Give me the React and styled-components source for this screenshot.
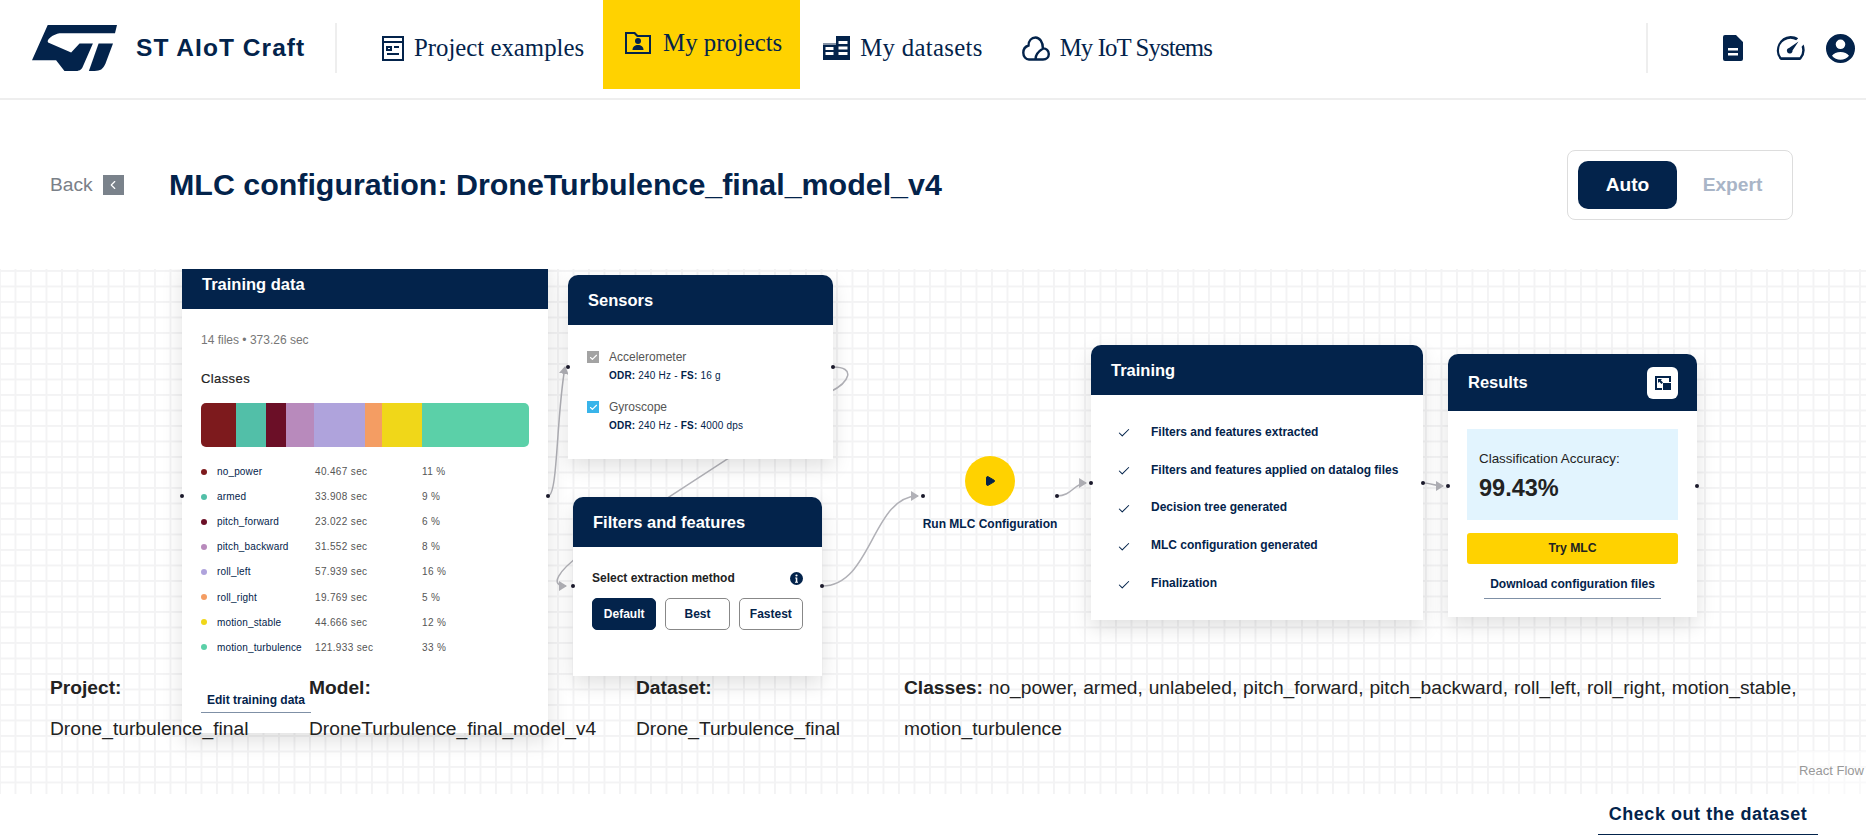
import styled, { createGlobalStyle } from "styled-components";
import { Check, ChevronLeft, Play } from "lucide-react";

const NAVY = "#03234b";

const GlobalStyle = createGlobalStyle`
  html, body {
    margin: 0;
    padding: 0;
    background: #fff;
    overflow: hidden;
  }
  body {
    font-family: "Liberation Sans", Arial, sans-serif;
    color: #222;
  }
  * {
    box-sizing: border-box;
  }
`;

const Page = styled.div`
  width: 1866px;
  height: 840px;
  display: flex;
  flex-direction: column;
`;

const Header = styled.header`
  height: 100px;
  flex: none;
  display: flex;
  align-items: flex-start;
  border-bottom: 2px solid #eee;
  padding: 0 11px 0 32px;
`;

const Brand = styled.div`
  display: flex;
  align-items: center;
  height: 96px;
  width: 303px;
  flex: none;
  gap: 19px;
`;

const BrandName = styled.span`
  font-size: 24.5px;
  font-weight: 700;
  color: ${NAVY};
  letter-spacing: 1.05px;
  white-space: nowrap;
`;

const Divider = styled.div`
  width: 2px;
  height: 50px;
  margin-top: 23px;
  flex: none;
  background: #eee;
`;

const Nav = styled.nav`
  display: flex;
  align-items: flex-start;
  margin-left: 45px;
  flex: 1;
`;

const NavItem = styled.a`
  display: flex;
  align-items: center;
  gap: ${(props) => props.$gap || 10}px;
  height: ${(props) => (props.$active ? 89 : 96)}px;
  padding: ${(props) => (props.$active ? "0 18px 3px 22px" : "0")};
  margin-left: ${(props) => props.$left || 0}px;
  background: ${(props) => (props.$active ? "#ffd200" : "transparent")};
  font-family: "Liberation Serif", serif;
  font-size: 24.8px;
  letter-spacing: ${(props) => props.$spacing || 0}px;
  color: ${NAVY};
  white-space: nowrap;
`;

const Tools = styled.div`
  display: flex;
  align-items: center;
  height: 96px;
  flex: none;
`;

const ToolIcon = styled.svg`
  display: block;
  margin-left: ${(props) => props.$left}px;
  fill: ${NAVY};
`;

const TitleBar = styled.div`
  height: 169px;
  flex: none;
  display: flex;
  align-items: center;
  padding: 0 73px 0 50px;
`;

const Back = styled.div`
  display: flex;
  align-items: center;
  gap: 10px;
  font-size: 19.2px;
  color: #7a8088;
  width: 119px;
  flex: none;
`;

const BackBox = styled.span`
  display: flex;
  align-items: center;
  justify-content: center;
  width: 21px;
  height: 20px;
  background: #7a828b;
  color: #fff;
`;

const PageTitle = styled.h1`
  margin: 0;
  flex: 1;
  font-size: 30.4px;
  font-weight: 700;
  color: ${NAVY};
  white-space: nowrap;
`;

const Toggle = styled.div`
  display: flex;
  align-items: center;
  width: 226px;
  height: 70px;
  padding: 0 10px;
  border: 1px solid #ddd;
  border-radius: 8px;
`;

const ToggleOption = styled.span`
  flex: none;
  width: ${(props) => (props.$active ? 99 : 105)}px;
  height: 48px;
  padding-left: ${(props) => (props.$active ? 0 : 6)}px;
  line-height: 48px;
  text-align: center;
  border-radius: 10px;
  font-size: 19.2px;
  font-weight: 700;
  background: ${(props) => (props.$active ? NAVY : "transparent")};
  color: ${(props) => (props.$active ? "#fff" : "#a9b5c7")};
`;

const Canvas = styled.main`
  position: relative;
  height: 525px;
  flex: none;
  overflow: hidden;
  background-color: #fff;
  background-image: linear-gradient(to right, #f3f3f4 2px, transparent 2px),
    linear-gradient(to bottom, #f3f3f4 2px, transparent 2px);
  background-size: 15.5px 15.5px;
  background-position: -1px 1px;
`;

const Edges = styled.svg`
  position: absolute;
  inset: 0;
  fill: none;
  stroke: #b1b1b7;
  stroke-width: 1.5;
`;

const Node = styled.section`
  position: absolute;
  left: ${(props) => props.$x}px;
  top: ${(props) => props.$y}px;
  width: ${(props) => props.$w}px;
  height: ${(props) => props.$h}px;
  background: #fff;
  border-radius: ${(props) => (props.$square ? "0" : "10px 10px 0 0")};
  box-shadow: 0 8px 20px rgba(0, 0, 0, 0.12);
  display: flex;
  flex-direction: column;
`;

const NodeHeader = styled.div`
  height: ${(props) => props.$h || 50}px;
  flex: none;
  display: flex;
  align-items: center;
  justify-content: space-between;
  padding: 0 19px 0 20px;
  background: ${NAVY};
  border-radius: inherit;
  font-size: 16.5px;
  font-weight: 700;
  color: #fff;
`;

const Handle = styled.i`
  position: absolute;
  left: ${(props) => props.$x}px;
  top: ${(props) => props.$y}px;
  width: 4px;
  height: 4px;
  margin: -2px 0 0 -2px;
  border-radius: 50%;
  background: #1a192b;
`;

const TrainingBody = styled.div`
  padding: 24px 19px 0;
`;

const Muted = styled.div`
  font-size: 12px;
  line-height: 14px;
  color: #777;
`;

const SectionLabel = styled.div`
  margin-top: 24px;
  font-size: 13px;
  line-height: 15px;
  font-weight: 500;
  letter-spacing: 0.4px;
  color: #222;
  -webkit-text-stroke: 0.2px #222;
`;

const Bar = styled.div`
  display: flex;
  height: 44px;
  margin-top: 17px;
  border-radius: 5px;
  overflow: hidden;
`;

const Segment = styled.span`
  width: ${(props) => props.$w}px;
  background: ${(props) => props.$color};
`;

const ClassList = styled.div`
  margin-top: 12px;
`;

const ClassRow = styled.div`
  display: grid;
  grid-template-columns: 16px 98px 107px 1fr;
  align-items: center;
  height: 25.1px;
  font-size: 10px;
  letter-spacing: 0.35px;
  color: #555;
`;

const Dot = styled.span`
  width: 6px;
  height: 6px;
  border-radius: 50%;
  background: ${(props) => props.$color};
`;

const ClassName = styled.span`
  color: ${NAVY};
  letter-spacing: 0.15px;
`;

const LinkButton = styled.a`
  display: block;
  text-align: center;
  font-weight: 700;
  color: ${NAVY};
  border-bottom: 1px solid #7f90a6;
  font-size: ${(props) => props.$size}px;
  width: ${(props) => props.$w}px;
  padding-bottom: ${(props) => props.$pad}px;
  margin: ${(props) => props.$margin};
`;

const SensorBody = styled.div`
  padding: 25px 19px 0;
  display: flex;
  flex-direction: column;
  gap: 17px;
`;

const Sensor = styled.div`
  display: grid;
  grid-template-columns: 22px 1fr;
  row-gap: 5px;
  align-items: center;
`;

const CheckBox = styled.span`
  display: flex;
  align-items: center;
  justify-content: center;
  width: 12px;
  height: 12px;
  color: #fff;
  background: ${(props) => props.$color};
`;

const SensorName = styled.span`
  font-size: 12px;
  line-height: 14px;
  color: #555;
`;

const SensorMeta = styled.span`
  grid-column: 2;
  font-size: 10px;
  line-height: 14px;
  letter-spacing: 0.2px;
  color: ${NAVY};
  b {
    font-weight: 700;
  }
`;

const FilterBody = styled.div`
  padding: 24px 19px 0;
`;

const FilterHead = styled.div`
  display: flex;
  align-items: center;
  justify-content: space-between;
  font-size: 12px;
  font-weight: 700;
  color: #222;
`;

const MethodRow = styled.div`
  display: flex;
  gap: 9px;
  margin-top: 13px;
`;

const MethodButton = styled.button`
  width: 65px;
  height: 32px;
  padding: 0;
  border-radius: 5px;
  border: 1px solid ${(props) => (props.$active ? NAVY : "#888")};
  background: ${(props) => (props.$active ? NAVY : "#fff")};
  color: ${(props) => (props.$active ? "#fff" : NAVY)};
  font-family: inherit;
  font-size: 12px;
  font-weight: 700;
`;

const RunNode = styled.div`
  position: absolute;
  left: ${(props) => props.$x}px;
  top: ${(props) => props.$y}px;
  width: 134px;
  display: flex;
  flex-direction: column;
  align-items: center;
`;

const RunButton = styled.span`
  display: flex;
  align-items: center;
  justify-content: center;
  width: 50px;
  height: 50px;
  border-radius: 50%;
  background: #ffd200;
  color: ${NAVY};
`;

const RunLabel = styled.span`
  margin-top: 11px;
  font-size: 12px;
  font-weight: 700;
  color: ${NAVY};
  white-space: nowrap;
`;

const StepList = styled.ul`
  list-style: none;
  margin: 0;
  padding: 18px 0 0 26px;
`;

const Step = styled.li`
  display: flex;
  align-items: center;
  gap: 20px;
  height: 37.8px;
  font-size: 12px;
  font-weight: 700;
  color: ${NAVY};
  svg {
    margin-top: 3px;
  }
`;

const ExpandButton = styled.span`
  display: flex;
  align-items: center;
  justify-content: center;
  width: 31px;
  height: 32px;
  border-radius: 6px;
  background: #fff;
`;

const ResultBody = styled.div`
  padding: 18px 19px 0;
`;

const Accuracy = styled.div`
  height: 91px;
  padding: 22px 12px 0;
  background: #e2f4fe;
  font-size: 13.4px;
`;

const AccuracyValue = styled.div`
  margin-top: 9px;
  font-size: 23.5px;
  font-weight: 700;
`;

const TryButton = styled.button`
  display: block;
  width: 100%;
  height: 31px;
  margin-top: 13px;
  padding: 0 0 2px;
  border: none;
  border-radius: 3px;
  background: #ffd200;
  color: #222;
  font-family: inherit;
  font-size: 12.2px;
  font-weight: 700;
`;

const Details = styled.div`
  position: absolute;
  left: 50px;
  top: 398px;
  width: 1760px;
  display: grid;
  grid-template-columns: 259px 327px 268px 1fr;
  font-size: 19.2px;
  line-height: 41px;
`;

const DetailBlock = styled.div`
  b {
    display: block;
  }
`;

const ClassesBlock = styled.div`
  word-spacing: 0.5px;
  b {
    font-weight: 700;
  }
`;

const Attribution = styled.a`
  position: absolute;
  right: 0;
  bottom: 0;
  padding: 12px 2px 16px 3px;
  background: rgba(255, 255, 255, 0.5);
  font-size: 13px;
  color: #999;
`;

const Footer = styled.div`
  flex: 1;
  display: flex;
  justify-content: flex-end;
  padding: 9px 48px 0 0;
`;

const FooterLink = styled.a`
  width: 220px;
  height: 32px;
  text-align: center;
  font-size: 18px;
  line-height: 22px;
  font-weight: 700;
  letter-spacing: 0.55px;
  color: ${NAVY};
  border-bottom: 1px solid ${NAVY};
`;

const Logo = () => (
  <svg width="85" height="46" viewBox="18 15 254 150" preserveAspectRatio="none" fill={NAVY}>
    <path d="M65 15H272L266 42H103C88 42 60 60 66 72L135 105L160 75H200L170 150C166 162 158 165 145 165H115L90 130H18Z" />
    <path d="M217 75H260L238 140C230 160 222 165 205 165H188Z" />
  </svg>
);

const ExamplesIcon = () => (
  <svg width="22" height="25" viewBox="0 0 22 25" fill="none" stroke={NAVY} strokeWidth="2">
    <rect x="1" y="1" width="20" height="23" />
    <path d="M1 6h20M5 11h4v3H5zM12 11h5M5 18h12" />
  </svg>
);

const FolderIcon = () => (
  <svg width="26" height="22" viewBox="0 0 26 22" fill={NAVY}>
    <path fillRule="evenodd" d="M0 0h10l3 3h13v19H0zM2 2v18h22V5H12L9 2z" />
    <circle cx="13" cy="9" r="3" />
    <path d="M7.5 18c0-3.5 2.5-5 5.5-5s5.5 1.500 5.500 5z" />
  </svg>
);

const DatasetIcon = () => (
  <svg width="27" height="24" viewBox="0 0 27 24" fill={NAVY}>
    <path fillRule="evenodd" d="M13 0h14v24H0V7h13zM2.500 11v3h8v-3zM2.500 16v3h8v-3zM15.500 5v3h9V5zM15.500 10.500v3h9v-3zM15.500 16v3h9v-3z" />
    <path d="M0 7h13v2H0z" fill="#8593a6" />
  </svg>
);

const CloudIcon = () => (
  <svg width="28" height="25" viewBox="0 0 28 25" fill="none" stroke={NAVY} strokeWidth="2.4" strokeLinecap="round">
    <path d="M7 23.500h14c3.500 0 5.800-2.500 5.800-5.600 0-3.300-2.600-5.700-5.900-5.500C21 6 17.500 1.500 13.500 1.500 9.500 1.500 6.600 4.800 6.500 9.500 3.300 10.500 1.300 13.500 1.300 16.800c0 3.700 2.500 6.700 5.700 6.700zM13.500 23c0-4.500 2.700-7.500 7.500-10.500" />
  </svg>
);

const InfoIcon = () => (
  <svg width="13" height="13" viewBox="0 0 13 13">
    <circle cx="6.5" cy="6.5" r="6.5" fill={NAVY} />
    <circle cx="6.5" cy="3.500" r="1.100" fill="#fff" />
    <path d="M5.200 5.500h2.100v4.300h.7v1H5v-1h.8V6.500h-.6z" fill="#fff" />
  </svg>
);

const App = () => {
  const classes = [
    { name: "no_power", time: "40.467 sec", pct: "11 %", color: "#7d1a1d", w: 35 },
    { name: "armed", time: "33.908 sec", pct: "9 %", color: "#52bfa8", w: 30 },
    { name: "pitch_forward", time: "23.022 sec", pct: "6 %", color: "#6b0f27", w: 20 },
    { name: "pitch_backward", time: "31.552 sec", pct: "8 %", color: "#b88abc", w: 28 },
    { name: "roll_left", time: "57.939 sec", pct: "16 %", color: "#afa3dc", w: 51 },
    { name: "roll_right", time: "19.769 sec", pct: "5 %", color: "#f49d63", w: 17 },
    { name: "motion_stable", time: "44.666 sec", pct: "12 %", color: "#f0d719", w: 40 },
    { name: "motion_turbulence", time: "121.933 sec", pct: "33 %", color: "#5bd0a8", w: 107 },
  ];
  const steps = [
    "Filters and features extracted",
    "Filters and features applied on datalog files",
    "Decision tree generated",
    "MLC configuration generated",
    "Finalization",
  ];

  return (
    <Page>
      <GlobalStyle />
      <Header>
        <Brand>
          <Logo />
          <BrandName>ST AIoT Craft</BrandName>
        </Brand>
        <Divider />
        <Nav>
          <NavItem>
            <ExamplesIcon />
            Project examples
          </NavItem>
          <NavItem $active $left={19} $gap={12}>
            <FolderIcon />
            My projects
          </NavItem>
          <NavItem $left={23} $gap={10} $spacing={0.3}>
            <DatasetIcon />
            My datasets
          </NavItem>
          <NavItem $left={39} $gap={10} $spacing={-0.9}>
            <CloudIcon />
            My IoT Systems
          </NavItem>
        </Nav>
        <Divider />
        <Tools>
          <ToolIcon $left={75} width="20" height="26" viewBox="0 0 20 26">
            <path fillRule="evenodd" d="M2 0h11l7 7v17a2 2 0 0 1-2 2H2a2 2 0 0 1-2-2V2a2 2 0 0 1 2-2zM5 13v2.500h10V13zM5 18v2.500h10V18z" />
          </ToolIcon>
          <ToolIcon $left={33} width="29" height="24" viewBox="0 0 29 24">
            <path fillRule="evenodd" d="M14.500 0c3 0 5.500.8 7.700 2.200l-2 2.100A11.500 11.500 0 0 0 3 14.500c0 2.600.8 5 2.300 6.800h18.400a11.500 11.500 0 0 0 1.900-10.600l2-2.100A14.500 14.500 0 0 1 25.300 23c-.4.600-1 1-1.700 1H5.400c-.7 0-1.300-.4-1.700-1A14.500 14.500 0 0 1 14.500 0z" />
            <path d="M22.500 5.500l-6 9a2.800 2.800 0 1 1-3.500-2.500z" />
          </ToolIcon>
          <ToolIcon $left={21} width="29" height="29" viewBox="0 0 29 29">
            <path fillRule="evenodd" d="M14.500 0a14.500 14.500 0 1 1 0 29 14.500 14.500 0 0 1 0-29zM14.500 5.500a4.800 4.800 0 1 0 0 9.600 4.800 4.800 0 0 0 0-9.600zM14.500 18c-3.600 0-7 1.500-8.500 3.800a11 11 0 0 0 17 0C21.500 19.500 18.100 18 14.500 18z" />
          </ToolIcon>
        </Tools>
      </Header>

      <TitleBar>
        <Back>
          Back
          <BackBox>
            <ChevronLeft size={14} />
          </BackBox>
        </Back>
        <PageTitle>MLC configuration: DroneTurbulence_final_model_v4</PageTitle>
        <Toggle>
          <ToggleOption $active>Auto</ToggleOption>
          <ToggleOption>Expert</ToggleOption>
        </Toggle>
      </TitleBar>

      <Canvas>
        <Edges width="1866" height="525">
          <defs>
            <marker id="arrow" markerWidth="10" markerHeight="10" refX="7" refY="5" orient="auto" markerUnits="userSpaceOnUse">
              <path d="M0 0L8 5L0 10z" fill="#b1b1b7" stroke="none" />
            </marker>
          </defs>
          <path markerEnd="url(#arrow)" d="M548 227C558 227 556 150 565 98" />
          <path markerEnd="url(#arrow)" d="M833 98C856 98 850 113 830 123L580 286C560 301 548 317 566 317" />
          <path markerEnd="url(#arrow)" d="M822 317C872 317 872 227 918 227" />
          <path markerEnd="url(#arrow)" d="M1057 227C1072 227 1074 214 1086 214" />
          <path markerEnd="url(#arrow)" d="M1423 214C1432 214 1434 217 1443 217" />
        </Edges>

        <Node $square $x={182} $y={-10} $w={366} $h={474}>
          <NodeHeader>Training data</NodeHeader>
          <TrainingBody>
            <Muted>14 files • 373.26 sec</Muted>
            <SectionLabel>Classes</SectionLabel>
            <Bar>
              {classes.map((item) => (
                <Segment key={item.name} $w={item.w} $color={item.color} />
              ))}
            </Bar>
            <ClassList>
              {classes.map((item) => (
                <ClassRow key={item.name}>
                  <Dot $color={item.color} />
                  <ClassName>{item.name}</ClassName>
                  <span>{item.time}</span>
                  <span>{item.pct}</span>
                </ClassRow>
              ))}
            </ClassList>
            <LinkButton $size={12} $w={110} $pad={5} $margin="33px 0 0">
              Edit training data
            </LinkButton>
          </TrainingBody>
        </Node>
        <Handle $x={182} $y={227} />
        <Handle $x={548} $y={227} />

        <Node $x={568} $y={6} $w={265} $h={184}>
          <NodeHeader>Sensors</NodeHeader>
          <SensorBody>
            <Sensor>
              <CheckBox $color="#a3a3a3">
                <Check size={9} strokeWidth={3} />
              </CheckBox>
              <SensorName>Accelerometer</SensorName>
              <SensorMeta>
                <b>ODR:</b> 240 Hz - <b>FS:</b> 16 g
              </SensorMeta>
            </Sensor>
            <Sensor>
              <CheckBox $color="#39b4ea">
                <Check size={9} strokeWidth={3} />
              </CheckBox>
              <SensorName>Gyroscope</SensorName>
              <SensorMeta>
                <b>ODR:</b> 240 Hz - <b>FS:</b> 4000 dps
              </SensorMeta>
            </Sensor>
          </SensorBody>
        </Node>
        <Handle $x={568} $y={98} />
        <Handle $x={833} $y={98} />

        <Node $x={573} $y={228} $w={249} $h={179}>
          <NodeHeader>Filters and features</NodeHeader>
          <FilterBody>
            <FilterHead>
              Select extraction method
              <InfoIcon />
            </FilterHead>
            <MethodRow>
              <MethodButton $active>Default</MethodButton>
              <MethodButton>Best</MethodButton>
              <MethodButton>Fastest</MethodButton>
            </MethodRow>
          </FilterBody>
        </Node>
        <Handle $x={573} $y={317} />
        <Handle $x={822} $y={317} />

        <RunNode $x={923} $y={187}>
          <RunButton>
            <Play size={12} fill={NAVY} />
          </RunButton>
          <RunLabel>Run MLC Configuration</RunLabel>
        </RunNode>
        <Handle $x={923} $y={227} />
        <Handle $x={1057} $y={227} />

        <Node $x={1091} $y={76} $w={332} $h={275}>
          <NodeHeader>Training</NodeHeader>
          <StepList>
            {steps.map((step) => (
              <Step key={step}>
                <Check size={14} strokeWidth={1.8} />
                {step}
              </Step>
            ))}
          </StepList>
        </Node>
        <Handle $x={1091} $y={214} />
        <Handle $x={1423} $y={214} />

        <Node $x={1448} $y={85} $w={249} $h={263}>
          <NodeHeader $h={57}>
            Results
            <ExpandButton>
              <svg width="16" height="14" viewBox="0 0 16 14" fill={NAVY}>
                <path fillRule="evenodd" d="M0 0h16v6h-2V2H2v10h5v2H0z" />
                <path d="M8 7h8v7H8zM3 3h4L5.800 4.300 8 6.500 6.500 8 4.300 5.800 3 7z" />
              </svg>
            </ExpandButton>
          </NodeHeader>
          <ResultBody>
            <Accuracy>
              Classification Accuracy:
              <AccuracyValue>99.43%</AccuracyValue>
            </Accuracy>
            <TryButton>Try MLC</TryButton>
            <LinkButton $size={12} $w={177} $pad={7} $margin="13px auto 0">
              Download configuration files
            </LinkButton>
          </ResultBody>
        </Node>
        <Handle $x={1448} $y={217} />
        <Handle $x={1697} $y={217} />

        <Details>
          <DetailBlock>
            <b>Project:</b>
            Drone_turbulence_final
          </DetailBlock>
          <DetailBlock>
            <b>Model:</b>
            DroneTurbulence_final_model_v4
          </DetailBlock>
          <DetailBlock>
            <b>Dataset:</b>
            Drone_Turbulence_final
          </DetailBlock>
          <ClassesBlock>
            <b>Classes:</b> no_power, armed, unlabeled, pitch_forward, pitch_backward, roll_left, roll_right, motion_stable, motion_turbulence
          </ClassesBlock>
        </Details>
        <Attribution>React Flow</Attribution>
      </Canvas>

      <Footer>
        <FooterLink>Check out the dataset</FooterLink>
      </Footer>
    </Page>
  );
};

export default App;
